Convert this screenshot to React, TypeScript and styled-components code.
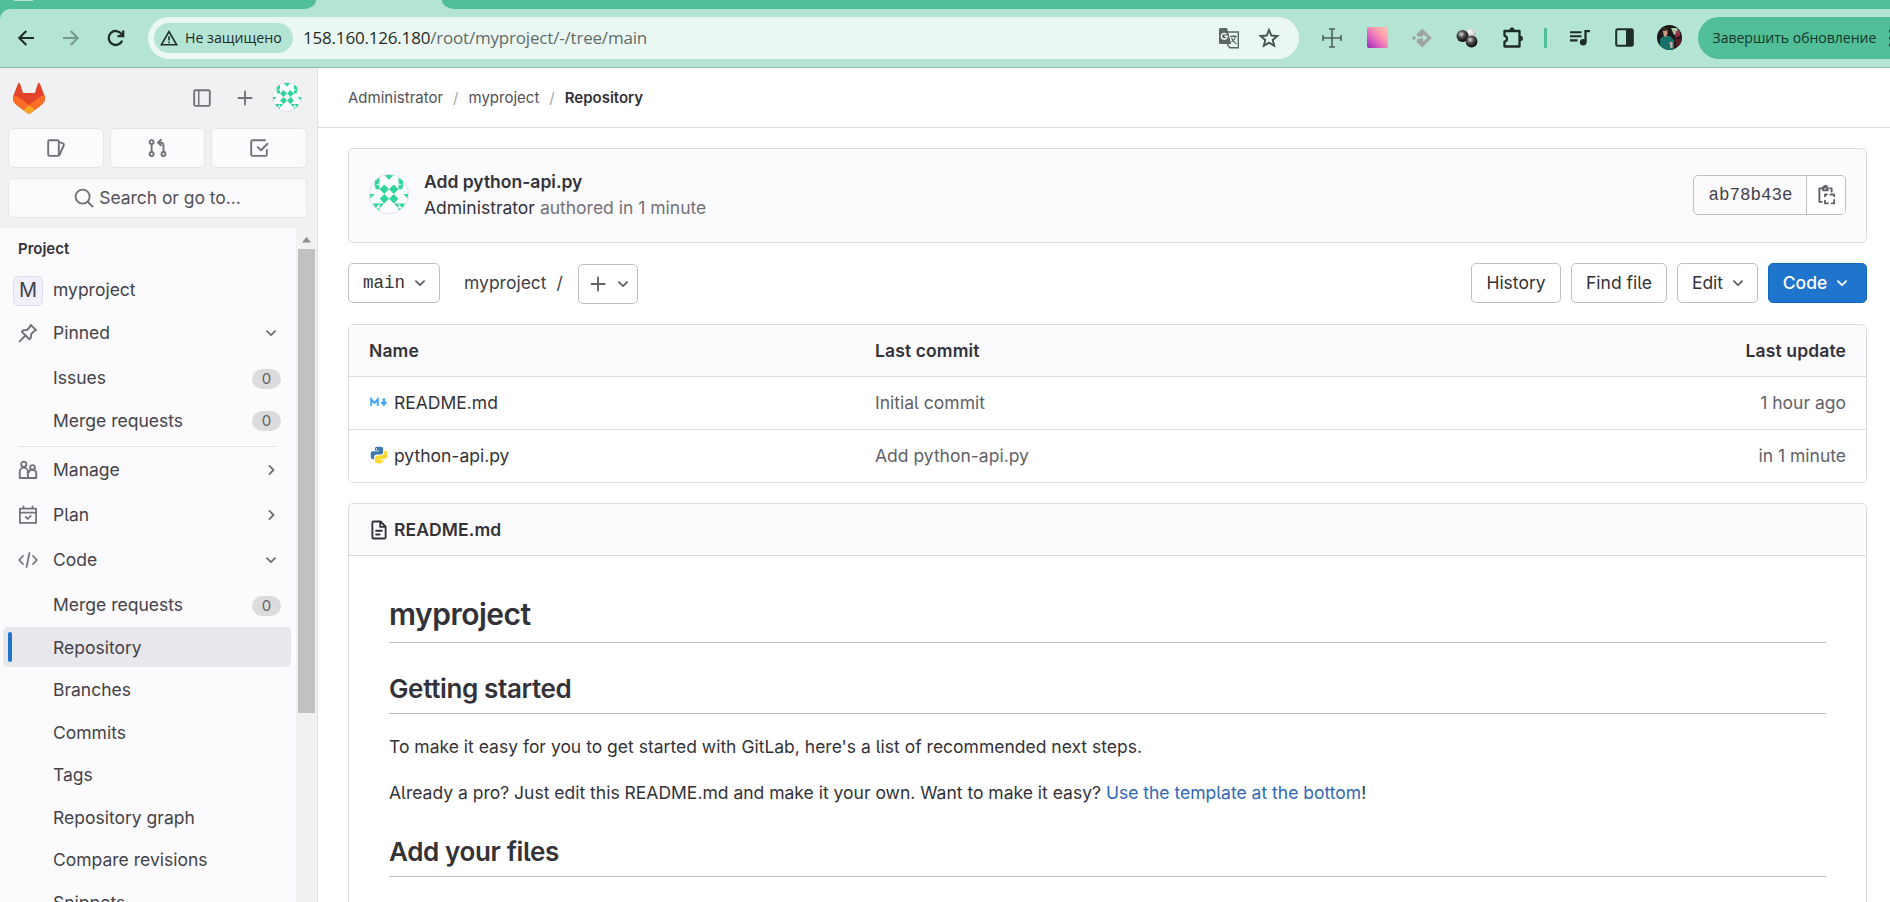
import React from "react";
import styled, { createGlobalStyle, css } from "styled-components";

const GlobalStyle = createGlobalStyle`
  * { box-sizing: border-box; }
  html, body { margin: 0; padding: 0; height: 902px; overflow: hidden; }
  body {
    background: #fff;
    color: #333238;
    font-family: Inter, "Noto Sans", sans-serif;
    font-size: 17.5px;
    line-height: 25px;
    font-feature-settings: "cv05";
  }
  svg { display: block; flex: none; }
`;

/* ---------- browser chrome ---------- */

const Window = styled.div`
  width: 1890px;
  height: 902px;
  display: flex;
  flex-direction: column;
  overflow: hidden;
`;

const TabStrip = styled.div`
  height: 9px;
  flex: none;
  display: flex;
  background: #b4e4d4;
`;

const TabSegment = styled.div<{ $width?: number; $side: "left" | "right" }>`
  height: 9px;
  background: #50be96;
  ${(p) => (p.$width ? `width: ${p.$width}px;` : "flex: 1;")}
  ${(p) => (p.$side === "left" ? "border-bottom-right-radius: 12px 9px;" : "border-bottom-left-radius: 12px 9px;")}
`;

const ActiveTab = styled.div`
  width: 126px;
`;

const TabFavicon = styled.div`
  width: 19px;
  height: 1px;
  margin-left: 14px;
  background: #b4e4d4;
`;

const ToolbarFrame = styled.div`
  height: 59px;
  flex: none;
  background: #50be96;
`;

const Toolbar = styled.div`
  height: 59px;
  display: flex;
  align-items: center;
  padding: 0 0 1px 4px;
  background: #b4e4d4;
  border-bottom: 1px solid #8dbcaa;
  border-top-left-radius: 10px;
  color: #1f2c27;
`;

const IconSlot = styled.div<{ $width?: number }>`
  width: ${(p) => p.$width ?? 45}px;
  height: 42px;
  flex: none;
  display: flex;
  align-items: center;
  justify-content: center;
`;

const Omnibox = styled.div`
  width: 1151px;
  height: 42px;
  flex: none;
  margin: 0 10.5px 0 10px;
  padding: 0 10px 0 6px;
  display: flex;
  align-items: center;
  border-radius: 21px;
  background: #ebf7f3;
`;

const SecurityChip = styled.div`
  width: 139px;
  height: 30px;
  display: flex;
  align-items: center;
  gap: 7px;
  padding-left: 6px;
  border-radius: 15px;
  background: #b4e4d4;
  font: 500 14.2px/30px "Open Sans", "Noto Sans", sans-serif;
  white-space: nowrap;
`;

const Address = styled.div`
  flex: 1;
  margin-left: 10px;
  color: #5e6d67;
  font: 400 17px/30px "Open Sans", "Noto Sans", sans-serif;
  letter-spacing: -0.19px;
`;

const Host = styled.span`
  color: #1f2c27;
`;

const ToolbarDivider = styled.div`
  width: 3px;
  height: 20px;
  border-radius: 1px;
  background: #50be96;
`;

const PinkTile = styled.div`
  width: 21px;
  height: 21px;
  border-radius: 2px;
  background: linear-gradient(45deg, #9a25b5 0%, #e96fbe 42%, #ff9cae 65%, #ffc7b4 100%);
`;

const UpdateButton = styled.div`
  flex: 1;
  height: 42px;
  margin-left: 5px;
  padding-left: 15px;
  display: flex;
  align-items: center;
  gap: 13px;
  border-radius: 21px 0 0 21px;
  background: #50be96;
  color: #14352a;
  font: 400 14px/42px "Open Sans", "Noto Sans", sans-serif;
  white-space: nowrap;
  overflow: hidden;
`;

/* ---------- application frame ---------- */

const Page = styled.div`
  flex: 1;
  min-height: 0;
  display: flex;
`;

const Sidebar = styled.aside`
  width: 318px;
  flex: none;
  display: flex;
  flex-direction: column;
  background: #f1f1f4;
  border-right: 1px solid #e2e2e6;
`;

const SidebarTop = styled.div`
  height: 160px;
  flex: none;
  padding: 15px 10px 0 8px;
  display: flex;
  flex-direction: column;
`;

const BrandRow = styled.div`
  height: 30px;
  display: flex;
  align-items: center;
  padding: 0 5px 0 4.5px;
`;

const Spacer = styled.div`
  flex: 1;
`;

const BrandActions = styled.div`
  display: flex;
  align-items: center;
  gap: 23px;
  margin-right: 17px;
  color: #737278;
`;

const CounterRow = styled.div`
  display: flex;
  gap: 6px;
  margin-top: 15px;
`;

const topButton = css`
  height: 40px;
  display: flex;
  align-items: center;
  justify-content: center;
  border: 1px solid #e6e6ea;
  border-radius: 5px;
  background: #fbfafd;
  color: #737278;
`;

const CounterButton = styled.div`
  ${topButton}
  flex: 1;
`;

const SearchButton = styled.div`
  ${topButton}
  margin-top: 9.5px;
  gap: 5px;
`;

const SearchLabel = styled.span`
  color: #535158;
  letter-spacing: -0.04px;
`;

const SidebarBody = styled.div`
  flex: 1;
  min-height: 0;
  display: flex;
`;

const Nav = styled.nav`
  width: 296px;
  height: 674px;
  overflow: hidden;
  padding-top: 3px;
  background: #fbfafd;
`;

const NavHeading = styled.div`
  height: 39px;
  padding-left: 18px;
  font-size: 15px;
  font-weight: 600;
  line-height: 36px;
`;

const NavRow = styled.div<{ $top?: boolean; $active?: boolean }>`
  height: 40px;
  margin: ${(p) => (p.$top ? "5px" : "2.5px")} 5px 0 3px;
  padding: 0 10px 0 5px;
  display: flex;
  align-items: center;
  border-radius: 5px;
  color: #434248;
  background: ${(p) => (p.$active ? "#e8e7ec" : "transparent")};
`;

const ActiveMark = styled.div<{ $active?: boolean }>`
  width: 4px;
  height: 30px;
  border-radius: 2px;
  background: ${(p) => (p.$active ? "#1f75cb" : "transparent")};
`;

const NavIcon = styled.div`
  width: 41px;
  display: flex;
  padding-left: 6px;
  color: #737278;
`;

const ProjectRow = styled.div`
  height: 40px;
  padding: 0 0 1px 13px;
  display: flex;
  align-items: center;
  gap: 10px;
  color: #434248;
`;

const ProjectAvatar = styled.div`
  width: 30px;
  height: 30px;
  display: flex;
  align-items: center;
  justify-content: center;
  margin-top: 2px;
  border: 1px solid #dedcec;
  border-radius: 5px;
  background: #f2effd;
  font-size: 20px;
`;

const NavLabel = styled.span`
  flex: 1;
  white-space: nowrap;
`;

const Chevron = styled.div`
  width: 20px;
  color: #737278;
`;

const Badge = styled.span`
  width: 29px;
  height: 20px;
  margin-top: 2px;
  border-radius: 10px;
  background: #dcdcde;
  color: #626168;
  font-size: 15px;
  line-height: 20px;
  text-align: center;
`;

const NavDivider = styled.hr`
  height: 1px;
  margin: 6px 20px 2.5px 18px;
  border: 0;
  background: #e4e4e8;
`;

const Scrollbar = styled.div`
  flex: 1;
  display: flex;
  flex-direction: column;
  align-items: center;
  padding: 9px 0 0 0;
  background: #f1f1f1;
`;

const ScrollThumb = styled.div`
  width: 17px;
  height: 464px;
  margin-top: 6px;
  background: #c1c1c1;
`;

/* ---------- content ---------- */

const Main = styled.main`
  flex: 1;
  min-width: 0;
  display: flex;
  flex-direction: column;
`;

const TopBar = styled.div`
  height: 60px;
  flex: none;
  display: flex;
  align-items: center;
  gap: 10px;
  padding-left: 30px;
  border-bottom: 1px solid #dcdcde;
  font-size: 15px;
  color: #535158;
`;

const CrumbSlash = styled.span`
  color: #a4a3a8;
`;

const Current = styled.strong`
  font-weight: 600;
  color: #333238;
`;

const Content = styled.div`
  width: 1519px;
  margin: 20px 0 0 30px;
`;

const CommitCard = styled.section`
  height: 95px;
  padding: 0 20px 1px;
  display: flex;
  align-items: center;
  border: 1px solid #dcdcde;
  border-radius: 5px;
  background: #fbfafd;
`;

const CommitText = styled.div`
  flex: 1;
  margin: 0 0 1px 15px;
  line-height: 26px;
  color: #737278;
`;

const CommitTitle = styled.div`
  font-weight: 600;
  color: #333238;
`;

const Author = styled.span`
  color: #333238;
`;

const ShaGroup = styled.div`
  height: 40px;
  display: flex;
  border: 1px solid #bfbfc3;
  border-radius: 5px;
  overflow: hidden;
`;

const Sha = styled.div`
  width: 113px;
  padding-left: 1px;
  border-right: 1px solid #bfbfc3;
  color: #434248;
  font: 17.5px/38px "Liberation Mono", monospace;
  text-align: center;
`;

const CopyButton = styled.div`
  width: 38px;
  padding-right: 1px;
  display: flex;
  align-items: center;
  justify-content: center;
  background: #fff;
  color: #626168;
`;

const ControlRow = styled.div`
  height: 40px;
  margin-top: 20px;
  display: flex;
  align-items: center;
`;

const Button = styled.button<{ $width: number; $primary?: boolean; $mono?: boolean; $menu?: boolean }>`
  width: ${(p) => p.$width}px;
  height: 40px;
  padding: 0 0 1px ${(p) => (p.$menu ? 5 : 0)}px;
  flex: none;
  display: flex;
  align-items: center;
  justify-content: center;
  gap: 5px;
  border: 1px solid ${(p) => (p.$primary ? "#1068bf" : "#bfbfc3")};
  border-radius: 5px;
  background: ${(p) => (p.$primary ? "#1f75cb" : "#fff")};
  color: ${(p) => (p.$primary ? "#fff" : "#333238")};
  font-family: ${(p) => (p.$mono ? '"Liberation Mono", monospace' : "inherit")};
  font-size: 17.5px;
  font-weight: ${(p) => (p.$primary ? 500 : 400)};
  font-feature-settings: inherit;
  white-space: nowrap;
`;

const ButtonIcon = styled.span<{ $light?: boolean }>`
  display: flex;
  margin-top: 1px;
  color: ${(p) => (p.$light ? "#fff" : "#626168")};
`;

const PathLabel = styled.div`
  display: flex;
  gap: 10px;
  margin: 0 15px 1px 24px;
  color: #434248;
`;

const AddSlot = styled.div`
  padding-top: 2px;
`;

const ActionGroup = styled.div`
  margin-left: auto;
  display: flex;
  gap: 10px;
`;

const FileTable = styled.section`
  margin-top: 21px;
  border: 1px solid #dcdcde;
  border-radius: 5px;
  overflow: hidden;
`;

const FileRow = styled.div<{ $head?: boolean }>`
  height: ${(p) => (p.$head ? 51 : 53)}px;
  padding: 0 20px ${(p) => (p.$head ? 0 : 2)}px;
  display: grid;
  grid-template-columns: 506px 1fr auto;
  align-items: center;
  color: ${(p) => (p.$head ? "#333238" : "#626168")};
  background: ${(p) => (p.$head ? "#fbfafd" : "#fff")};
  font-weight: ${(p) => (p.$head ? 600 : 400)};
  letter-spacing: ${(p) => (p.$head ? 0.12 : 0)}px;
  & + & { border-top: 1px solid #dcdcde; }
`;

const FileName = styled.div`
  display: flex;
  align-items: center;
  gap: 5px;
  color: #333238;
`;

const Readme = styled.section`
  height: 440px;
  margin-top: 20px;
  border: 1px solid #dcdcde;
  border-radius: 5px;
`;

const ReadmeHeader = styled.div`
  height: 52px;
  padding: 0 20px;
  display: flex;
  align-items: center;
  gap: 5px;
  border-bottom: 1px solid #dcdcde;
  border-radius: 5px 5px 0 0;
  background: #fbfafd;
  font-weight: 600;
  letter-spacing: 0.1px;
`;

const Article = styled.article`
  padding: 40px 40px 0;
  p { margin: 0 0 20px; line-height: 26px; }
`;

const ArticleTitle = styled.h1`
  height: 47px;
  margin: 0 0 29px;
  border-bottom: 1px solid #bfbfc3;
  font-size: 30px;
  font-weight: 600;
  line-height: 37px;
  letter-spacing: -0.5px;
`;

const ArticleHeading = styled.h2`
  height: 42px;
  margin: 29px 0 20px;
  border-bottom: 1px solid #bfbfc3;
  font-size: 26px;
  font-weight: 600;
  line-height: 34px;
  letter-spacing: -0.36px;
`;

const Link = styled.a`
  color: #2f68b4;
`;

/* ---------- icons ---------- */

type IconProps = { size?: number; width?: number; children: React.ReactNode };

const Line = ({ size = 20, width = 1.5, children }: IconProps) => (
  <svg width={size} height={size} viewBox="0 0 16 16" fill="none" stroke="currentColor" strokeWidth={width} strokeLinecap="round" strokeLinejoin="round">
    {children}
  </svg>
);

const ChevronDown = () => (
  <Line><path d="M4.75 6.5 8 9.75l3.25-3.25" /></Line>
);
const ChevronRight = () => (
  <Line><path d="M6.75 4.75 10 8l-3.25 3.25" /></Line>
);
const PlusIcon = ({ size = 20 }: { size?: number }) => (
  <Line size={size}><path d="M8 2.75v10.500M2.750 8h10.500" /></Line>
);
const SidebarIcon = () => (
  <Line><rect x="1.75" y="1.75" width="12.5" height="12.5" rx="1" /><path d="M5.4 2v12" strokeWidth="1.2" /></Line>
);
const IssuesIcon = () => (
  <Line><rect x="1.75" y="1.75" width="8.5" height="12.5" rx="1" /><path d="M10.6 3.2l3.2 1.3c.5.2.7.6.5 1.1L10.8 13.6" /></Line>
);
const MergeIcon = () => (
  <Line>
    <circle cx="2.9" cy="3.25" r="1.6" /><circle cx="2.9" cy="12.75" r="1.6" /><circle cx="12.400" cy="12.75" r="1.6" />
    <path d="M2.900 5v6M12.400 11V6.2c0-1.6-.9-2.6-2.4-2.6H8.400M10.300 1.4 8 3.600l2.300 2.200" />
  </Line>
);
const TodoIcon = () => (
  <Line><path d="M12.75 1.75h-10a1 1 0 0 0-1 1v10.5a1 1 0 0 0 1 1h10.5a1 1 0 0 0 1-1V9.5M7 7.3l2.6 2.5 5.2-5.2" /></Line>
);
const SearchIcon = () => (
  <Line><circle cx="6.9" cy="6.9" r="5.6" /><path d="m11 11 3.9 3.9" /></Line>
);
const PinIcon = () => (
  <Line width={1.5}><path d="m10.200 1.500 4.300 4.300-1.500.6-2.500 2.500-.2 2.900-1.200 1.200-6-6 1.200-1.200 2.900-.2 2.400-2.600zM5.600 10.400l-4.300 4.300" /></Line>
);
const PeopleIcon = () => (
  <Line>
    <circle cx="4.6" cy="3.4" r="2.1" /><circle cx="11.6" cy="6" r="1.9" />
    <path d="M8 14.4H1.4V9.3a3.2 3.2 0 0 1 6.4 0zM8.2 14.4h6.4v-3.6a3 3 0 0 0-5.9-.9" />
  </Line>
);
const CalendarIcon = () => (
  <Line width={1.4}><path d="M1.5 2.9h13v11.4h-13zM1.5 6h13M4.4 1v1.9M11.6 1v1.9M6.2 9.6l1.6 1.5 2.4-2.4" /></Line>
);
const CodeIcon = () => (
  <Line width={1.4}><path d="M4 4.8.9 8 4 11.2M12 4.8 15.1 8 12 11.2M9.2 2.4 6.8 13.6" /></Line>
);
const CopyIcon = () => (
  <Line>
    <path d="M4.5 2.7H2.7v10.8h2M11.3 2.7h1.2v2.6M5.6 2h3.8v2.2H5.6zM6.2 2a1.3 1.3 0 0 1 2.6 0" />
    <path d="M7.2 9V7.6h1.5M11.5 7.6h3V9M14.5 12v2.7h-1.9M9.5 14.7H7.2V12.6" />
  </Line>
);
const DocIcon = () => (
  <Line><path d="M9.2 1.2H3.7a1 1 0 0 0-1 1v11.6a1 1 0 0 0 1 1h8.6a1 1 0 0 0 1-1V5.3zM9 1.4v4.1h4.1M5.7 8.6h4.6M5.7 11.6h2.8" /></Line>
);
const MarkdownIcon = () => (
  <svg width="20" height="20" viewBox="0 0 16 16" fill="none" stroke="#42a5f5" strokeWidth="1.6">
    <path d="M1.8 11V5.8l2.6 2.9L7 5.8V11" /><path d="M11.9 5v3.6" strokeWidth="2" /><path d="M8.9 8h6l-3 3.4z" fill="#42a5f5" stroke="none" />
  </svg>
);
const PythonIcon = () => (
  <svg width="20" height="20" viewBox="0 0 24 24">
    <path fill="#3c78aa" d="M9.86 2A2.86 2.86 0 0 0 7 4.86v1.68h4.29c.39 0 .71.57.71.96H4.86A2.86 2.86 0 0 0 2 10.36v3.78A2.86 2.86 0 0 0 4.86 17h1.18v-2.68a2.85 2.85 0 0 1 2.85-2.86h5.25A2.86 2.86 0 0 0 17 8.6V4.86A2.86 2.86 0 0 0 14.14 2zM9.14 3.7c.4 0 .72.3.72.89 0 .59-.32.89-.72.89-.39 0-.71-.3-.71-.89 0-.59.32-.89.71-.89z" />
    <path fill="#fdd835" d="M17.96 7v2.68a2.85 2.85 0 0 1-2.85 2.86H9.86A2.86 2.86 0 0 0 7 15.4v3.74A2.86 2.86 0 0 0 9.86 22h4.28A2.86 2.86 0 0 0 17 19.14v-1.68h-4.29c-.39 0-.71-.57-.71-.96h7.14A2.86 2.86 0 0 0 22 13.64V9.86A2.86 2.86 0 0 0 19.14 7zM14.86 18.52c.39 0 .71.3.71.89a.71.71 0 0 1-.71.71c-.4 0-.72-.32-.72-.71 0-.59.32-.89.72-.89z" />
  </svg>
);
const Tanuki = () => (
  <svg width="32" height="31" viewBox="0 0 25 24" preserveAspectRatio="none">
    <path d="m24.507 9.5-.034-.09L21.082.562a.896.896 0 0 0-1.694.091l-2.29 7.01H7.825L5.535.653a.898.898 0 0 0-1.694-.09L.451 9.411.416 9.5a6.297 6.297 0 0 0 2.09 7.278l.012.01.03.022 5.16 3.867 2.56 1.935 1.554 1.176a1.051 1.051 0 0 0 1.268 0l1.555-1.176 2.56-1.935 5.197-3.89.014-.01A6.297 6.297 0 0 0 24.507 9.5Z" fill="#E24329" />
    <path d="m24.507 9.5-.034-.09a11.44 11.44 0 0 0-4.56 2.051l-7.447 5.632 4.742 3.584 5.197-3.89.014-.01A6.297 6.297 0 0 0 24.507 9.5Z" fill="#FC6D26" />
    <path d="m7.707 20.677 2.56 1.935 1.555 1.176a1.051 1.051 0 0 0 1.268 0l1.555-1.176 2.56-1.935-4.743-3.584-4.755 3.584Z" fill="#FCA326" />
    <path d="M5.01 11.461a11.43 11.43 0 0 0-4.56-2.05L.416 9.5a6.297 6.297 0 0 0 2.09 7.278l.012.01.03.022 5.16 3.867 4.745-3.584-7.444-5.632Z" fill="#FC6D26" />
  </svg>
);

const AvatarFrame = styled.svg`
  margin-bottom: 2px;
  border-radius: 50%;
  border: 1px solid #e2e2e6;
  background: #fff;
`;

const Identicon = ({ size }: { size: number }) => (
  <AvatarFrame width={size} height={size} viewBox="0 0 16 16">
    <g fill="#30d59b">
      <path d="M6 0h4L8 2zM0 8h2l-2 2zM16 8h-2l2 2z" />
      <path d="M6 4l2 2-2 2-2-2zM10 4l2 2-2 2-2-2zM6 8l2 2-2 2-2-2zM10 8l2 2-2 2-2-2z" />
      <path d="M4 .6v3L2 4V2zM4 4v2L2.2 6l.4-1.2zM12 .6v3l2 .4V2zM12 4v2l1.8 0-.4-1.2zM2 4h1.6L2 5.4z M14 4h-1.6L14 5.4z" />
      <path d="M1.2 12H4l-1.6 2zM4 12h2l-2 2zM2.8 14H4v1.6zM14.8 12H12l1.6 2zM12 12h-2l2 2zM13.2 14H12v1.6z" />
    </g>
  </AvatarFrame>
);

const BackIcon = () => (
  <svg width="18" height="18" viewBox="0 0 18 18" fill="none" stroke="#1f2c27" strokeWidth="2.1"><path d="M17 9H2.6M9.3 2 2.3 9l7 7" /></svg>
);
const ForwardIcon = () => (
  <svg width="18" height="18" viewBox="0 0 18 18" fill="none" stroke="#76998c" strokeWidth="2"><path d="M1 9h14.4M8.7 2l7 7-7 7" /></svg>
);
const ReloadIcon = () => (
  <svg width="18" height="18" viewBox="0 0 18 18" fill="none" stroke="#1f2c27" strokeWidth="2.3"><path d="M15.2 11.6A7 7 0 1 1 14.6 5.2L16 6.6" /><path d="M16.2 1.4v5.7h-5.7" /></svg>
);
const WarningIcon = () => (
  <svg width="18" height="16" viewBox="0 0 18 16" fill="none" stroke="#1f2c27" strokeWidth="1.6"><path d="M9 1.7 16.6 14.8H1.4z" /><path d="M9 6.2v4.2M9 11.7v1.6" /></svg>
);
const TranslateIcon = () => (
  <svg width="22" height="22" viewBox="0 0 22 22">
    <path d="M9 5h11.3v15.8H11.6L9 16z" fill="none" stroke="#5b6662" strokeWidth="1.4" />
    <path d="M2.5 1h6.6l4.1 16H2.5A1.5 1.5 0 0 1 1 15.500V2.500A1.500 1.500 0 0 1 2.500 1z" fill="#5b6662" />
    <path d="M8.300 7.300a2.900 2.900 0 1 0 .8 2H6.500" fill="none" stroke="#ebf7f3" strokeWidth="1.500" />
    <path d="M12.200 9.400h6.600M15.400 8v1.400M17.500 9.500c-.4 2.400-2 4.200-4 5.500M13.400 10.800c.8 2.400 2.800 4.600 5 6.200" fill="none" stroke="#5b6662" strokeWidth="1.200" />
  </svg>
);
const StarIcon = () => (
  <svg width="22" height="22" viewBox="0 0 24 24" fill="none" stroke="#48544f" strokeWidth="2.100"><path d="m12 3.200 2.500 6.100 6.600.5-5 4.300 1.500 6.400L12 17l-5.600 3.500 1.500-6.400-5-4.300 6.600-.5z" /></svg>
);
const CrossIcon = () => (
  <svg width="20" height="20" viewBox="0 0 20 20" fill="none" stroke="#4f6159" strokeWidth="1.600"><path d="M10 1v18M1 10h18M7 1h6M7 19h6M1 7v6M19 7v6" /></svg>
);
const DiamondIcon = () => (
  <svg width="20" height="20" viewBox="0 0 20 20">
    <path d="M10.300.5 19.800 10l-9.500 9.500L4.500 13.700 6 10.500h5v3.300l4.300-4-4.300-3.900v2.500H6L4.300 6.500z" fill="#9da5a2" /><circle cx="1.900" cy="10" r="1.800" fill="#9da5a2" />
  </svg>
);
const BallsIcon = () => (
  <svg width="22" height="20" viewBox="0 0 22 20">
    <defs>
      <radialGradient id="dark" cx=".4" cy=".35" r=".6"><stop offset="0" stopColor="#ddd" /><stop offset=".45" stopColor="#555" /><stop offset="1" stopColor="#0b0b0b" /></radialGradient>
      <radialGradient id="pale" cx=".4" cy=".35" r=".7"><stop offset="0" stopColor="#fff" /><stop offset="1" stopColor="#a9b0ad" /></radialGradient>
    </defs>
    <circle cx="14.800" cy="5.500" r="5" fill="url(#pale)" /><circle cx="6.500" cy="8" r="6" fill="url(#dark)" /><circle cx="15.500" cy="13.500" r="5.900" fill="url(#dark)" />
  </svg>
);
const PuzzleIcon = () => (
  <svg width="22" height="22" viewBox="0 0 22 22">
    <path d="M2.500 4h15v15.500h-15v-4.800a3 3 0 0 0 0-5.900z" fill="none" stroke="#1f2c27" strokeWidth="2.300" strokeLinejoin="round" />
    <path d="M7.500 3.500a2.500 3 0 0 1 5 0zM18 8.800a2.900 2.700 0 0 1 0 5.400z" fill="#1f2c27" />
  </svg>
);
const MusicIcon = () => (
  <svg width="20" height="18" viewBox="0 0 20 18" fill="none" stroke="#1f2c27" strokeWidth="2.100"><path d="M0 3.200h11.500M0 7.300h11.500M0 11.400h7.500" /><path d="M15.500 13V2.200h4.500" strokeWidth="2.300" /><circle cx="13.200" cy="13.300" r="3.300" fill="#1f2c27" stroke="none" /></svg>
);
const PanelIcon = () => (
  <svg width="19" height="19" viewBox="0 0 19 19"><rect x="1.200" y="1.200" width="16.600" height="16.600" rx="1.500" fill="none" stroke="#1f2c27" strokeWidth="2" /><path d="M11 1h7v17h-7z" fill="#1f2c27" /></svg>
);
const ProfilePhoto = () => (
  <svg width="25" height="25" viewBox="0 0 25 25">
    <defs><clipPath id="face"><circle cx="12.500" cy="12.500" r="12.500" /></clipPath></defs>
    <g clipPath="url(#face)">
      <path d="M0 0h25v25H0z" fill="#1d1719" /><path d="M14 3h6l2 5-5 2z" fill="#a9c79c" /><path d="M19 6h4v5l-5 2z" fill="#91304a" />
      <path d="M3 25V14l4-3h6l4 4v10z" fill="#147269" /><path d="M5.500 4.500h5v4l-1 3H7z" fill="#c79a80" /><path d="M5 2.500h6v3l-6 .5z" fill="#352622" />
      <path d="M12.500 17h3v6h-2z" fill="#c9a79a" /><path d="M18 14h7v7h-6z" fill="#572027" />
    </g>
  </svg>
);
const DotsIcon = () => (
  <svg width="4" height="20" viewBox="0 0 4 20" fill="#14352a"><circle cx="2" cy="3" r="2" /><circle cx="2" cy="10" r="2" /><circle cx="2" cy="17" r="2" /></svg>
);
const ScrollArrow = () => (
  <svg width="9" height="6" viewBox="0 0 9 6"><path d="M0 5.500 4.500 0 9 5.500z" fill="#8b8b8b" /></svg>
);

/* ---------- data ---------- */

type Entry = { label: string; icon?: React.ReactNode; chevron?: "down" | "right"; count?: number; active?: boolean };

const pinned: Entry[] = [
  { label: "Pinned", icon: <PinIcon />, chevron: "down" },
  { label: "Issues", count: 0 },
  { label: "Merge requests", count: 0 },
];

const sections: Entry[] = [
  { label: "Manage", icon: <PeopleIcon />, chevron: "right" },
  { label: "Plan", icon: <CalendarIcon />, chevron: "right" },
  { label: "Code", icon: <CodeIcon />, chevron: "down" },
  { label: "Merge requests", count: 0 },
  { label: "Repository", active: true },
  { label: "Branches" },
  { label: "Commits" },
  { label: "Tags" },
  { label: "Repository graph" },
  { label: "Compare revisions" },
  { label: "Snippets" },
];

const files = [
  { name: "README.md", icon: <MarkdownIcon />, commit: "Initial commit", updated: "1 hour ago" },
  { name: "python-api.py", icon: <PythonIcon />, commit: "Add python-api.py", updated: "in 1 minute" },
];

const NavList = ({ entries }: { entries: Entry[] }) => (
  <>
    {entries.map((e, i) => (
      <NavRow key={e.label} $active={e.active} $top={i > 0 && (!!e.icon || !!entries[i - 1].icon)}>
        <ActiveMark $active={e.active} />
        <NavIcon>{e.icon}</NavIcon>
        <NavLabel>{e.label}</NavLabel>
        {e.chevron && <Chevron>{e.chevron === "down" ? <ChevronDown /> : <ChevronRight />}</Chevron>}
        {e.count !== undefined && <Badge>{e.count}</Badge>}
      </NavRow>
    ))}
  </>
);

export default function App() {
  return (
    <Window>
      <GlobalStyle />
      <TabStrip>
        <TabSegment $width={316} $side="left"><TabFavicon /></TabSegment>
        <ActiveTab />
        <TabSegment $side="right" />
      </TabStrip>
      <ToolbarFrame>
        <Toolbar>
          <IconSlot $width={44}><BackIcon /></IconSlot>
          <IconSlot $width={45}><ForwardIcon /></IconSlot>
          <IconSlot $width={45}><ReloadIcon /></IconSlot>
          <Omnibox>
            <SecurityChip><WarningIcon />Не защищено</SecurityChip>
            <Address><Host>158.160.126.180</Host>/root/myproject/-/tree/main</Address>
            <IconSlot $width={40}><TranslateIcon /></IconSlot>
            <IconSlot $width={40}><StarIcon /></IconSlot>
          </Omnibox>
          <IconSlot><CrossIcon /></IconSlot>
          <IconSlot><PinkTile /></IconSlot>
          <IconSlot><DiamondIcon /></IconSlot>
          <IconSlot><BallsIcon /></IconSlot>
          <IconSlot $width={46}><PuzzleIcon /></IconSlot>
          <IconSlot $width={20}><ToolbarDivider /></IconSlot>
          <IconSlot $width={48}><MusicIcon /></IconSlot>
          <IconSlot $width={42}><PanelIcon /></IconSlot>
          <IconSlot $width={47}><ProfilePhoto /></IconSlot>
          <UpdateButton>Завершить обновление<DotsIcon /></UpdateButton>
        </Toolbar>
      </ToolbarFrame>
      <Page>
        <Sidebar>
          <SidebarTop>
            <BrandRow>
              <Tanuki />
              <Spacer />
              <BrandActions>
                <SidebarIcon />
                <PlusIcon />
              </BrandActions>
              <Identicon size={30} />
            </BrandRow>
            <CounterRow>
              <CounterButton><IssuesIcon /></CounterButton>
              <CounterButton><MergeIcon /></CounterButton>
              <CounterButton><TodoIcon /></CounterButton>
            </CounterRow>
            <SearchButton><SearchIcon /><SearchLabel>Search or go to...</SearchLabel></SearchButton>
          </SidebarTop>
          <SidebarBody>
            <Nav>
              <NavHeading>Project</NavHeading>
              <ProjectRow><ProjectAvatar>M</ProjectAvatar>myproject</ProjectRow>
              <NavList entries={pinned} />
              <NavDivider />
              <NavList entries={sections} />
            </Nav>
            <Scrollbar><ScrollArrow /><ScrollThumb /></Scrollbar>
          </SidebarBody>
        </Sidebar>
        <Main>
          <TopBar>
            <span>Administrator</span><CrumbSlash>/</CrumbSlash>
            <span>myproject</span><CrumbSlash>/</CrumbSlash>
            <Current>Repository</Current>
          </TopBar>
          <Content>
            <CommitCard>
              <Identicon size={40} />
              <CommitText>
                <CommitTitle>Add python-api.py</CommitTitle>
                <div><Author>Administrator</Author> authored in 1 minute</div>
              </CommitText>
              <ShaGroup><Sha>ab78b43e</Sha><CopyButton><CopyIcon /></CopyButton></ShaGroup>
            </CommitCard>
            <ControlRow>
              <Button $width={92} $mono $menu>main<ButtonIcon><ChevronDown /></ButtonIcon></Button>
              <PathLabel><span>myproject</span><span>/</span></PathLabel>
              <AddSlot>
                <Button $width={60} $menu><ButtonIcon><PlusIcon /></ButtonIcon><ButtonIcon><ChevronDown /></ButtonIcon></Button>
              </AddSlot>
              <ActionGroup>
                <Button $width={90}>History</Button>
                <Button $width={96}>Find file</Button>
                <Button $width={81} $menu>Edit<ButtonIcon><ChevronDown /></ButtonIcon></Button>
                <Button $width={99} $primary>Code<ButtonIcon $light><ChevronDown /></ButtonIcon></Button>
              </ActionGroup>
            </ControlRow>
            <FileTable>
              <FileRow $head><span>Name</span><span>Last commit</span><span>Last update</span></FileRow>
              {files.map((f) => (
                <FileRow key={f.name}>
                  <FileName>{f.icon}{f.name}</FileName>
                  <span>{f.commit}</span>
                  <span>{f.updated}</span>
                </FileRow>
              ))}
            </FileTable>
            <Readme>
              <ReadmeHeader><DocIcon />README.md</ReadmeHeader>
              <Article>
                <ArticleTitle>myproject</ArticleTitle>
                <ArticleHeading>Getting started</ArticleHeading>
                <p>To make it easy for you to get started with GitLab, here's a list of recommended next steps.</p>
                <p>Already a pro? Just edit this README.md and make it your own. Want to make it easy? <Link>Use the template at the bottom</Link>!</p>
                <ArticleHeading>Add your files</ArticleHeading>
              </Article>
            </Readme>
          </Content>
        </Main>
      </Page>
    </Window>
  );
}
